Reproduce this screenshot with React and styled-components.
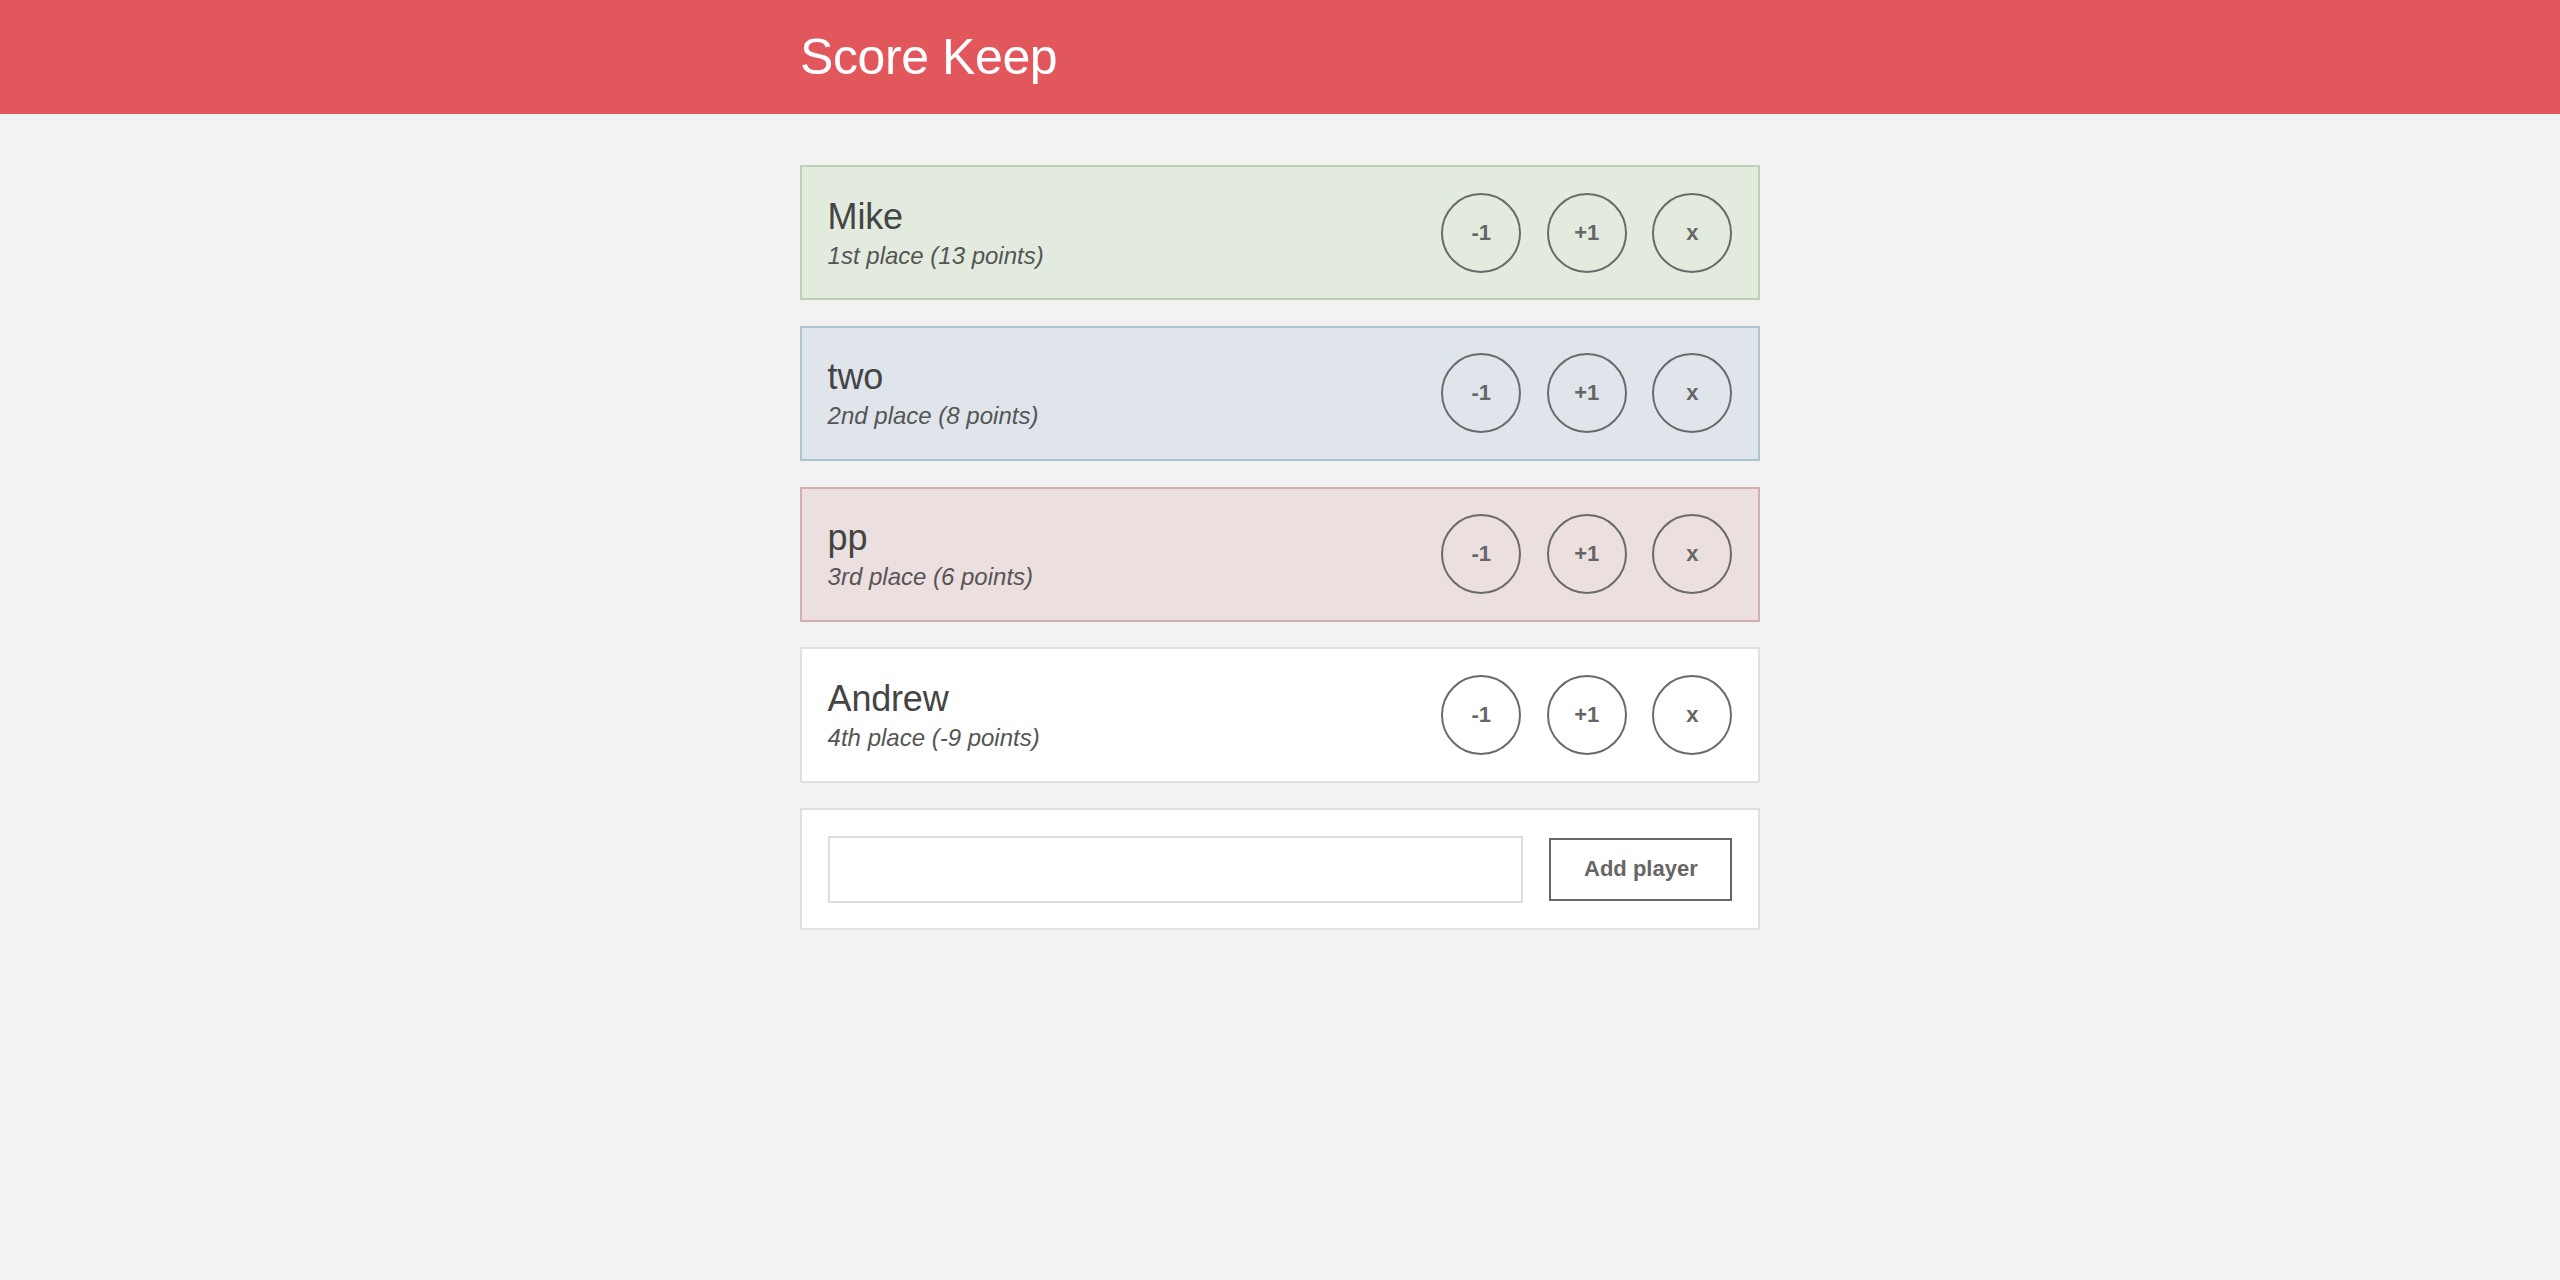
import styled, { createGlobalStyle } from "styled-components"

const GlobalStyle = createGlobalStyle`
    html, body {
        margin: 0;
        padding: 0;
        background-color: #f2f2f2;
        font-family: "Liberation Sans", Arial, Helvetica, sans-serif;
        color: #444;
    }
    * {
        box-sizing: border-box;
    }
`

const Cabecalho = styled.header`
    background-color: #e1575c;
    height: 114px;
    display: flex;
    align-items: center;
`

const Wrapper = styled.div`
    width: 960px;
    margin: 0 auto;
`

const Titulo = styled.h1`
    margin: 0;
    color: white;
    font-size: 50px;
    font-weight: 400;
    letter-spacing: -0.4px;
`

const Lista = styled.main`
    width: 960px;
    margin: 0 auto;
    padding-top: 51px;
    display: flex;
    flex-direction: column;
    gap: 25.6px;
`

const cores = {
    primeiro: { fundo: "#e3ebdf", borda: "#bcd2b2" },
    segundo: { fundo: "#dfe5eb", borda: "#afc2d1" },
    terceiro: { fundo: "#ecdfdf", borda: "#d4aeae" },
    outro: { fundo: "#ffffff", borda: "#e0e0e0" },
}

const Cartao = styled.div`
    display: flex;
    align-items: center;
    justify-content: space-between;
    padding: 25.6px;
    background-color: ${({ $rank }) => cores[$rank].fundo};
    border: 2px solid ${({ $rank }) => cores[$rank].borda};
`

const Info = styled.div`
    display: flex;
    flex-direction: column;
    gap: 4px;
`

const Nome = styled.h3`
    margin: 0;
    font-size: 36px;
    font-weight: 400;
    color: #444;
    letter-spacing: -0.2px;
`

const Posicao = styled.p`
    margin: 0;
    font-size: 24px;
    font-style: italic;
    font-weight: 400;
    color: #555;
`

const Acoes = styled.div`
    display: flex;
    gap: 25.6px;
`

const BotaoRedondo = styled.button`
    width: 80px;
    height: 80px;
    border-radius: 50%;
    border: 2px solid #6a6a6a;
    background: transparent;
    color: #666;
    font-family: "Liberation Sans", Arial, sans-serif;
    font-size: 22px;
    font-weight: 700;
    padding: 0;
    cursor: pointer;
`

const Formulario = styled.form`
    display: flex;
    align-items: center;
    gap: 26.6px;
    padding: 25.6px;
    background-color: white;
    border: 2px solid #e0e0e0;
`

const Campo = styled.input`
    flex: 1;
    height: 67px;
    border: 2px solid #dddddd;
    font-size: 22px;
    padding: 0 12px;
    outline: none;
`

const BotaoAdicionar = styled.button`
    width: 183px;
    height: 63px;
    border: 2px solid #666;
    background: transparent;
    color: #666;
    font-family: "Liberation Sans", Arial, sans-serif;
    font-size: 22px;
    font-weight: 700;
    cursor: pointer;
`

const jogadores = [
    { nome: "Mike", texto: "1st place (13 points)", rank: "primeiro" },
    { nome: "two", texto: "2nd place (8 points)", rank: "segundo" },
    { nome: "pp", texto: "3rd place (6 points)", rank: "terceiro" },
    { nome: "Andrew", texto: "4th place (-9 points)", rank: "outro" },
]

const App = () => {
    return (
        <>
            <GlobalStyle />
            <Cabecalho>
                <Wrapper>
                    <Titulo>Score Keep</Titulo>
                </Wrapper>
            </Cabecalho>
            <Lista>
                {jogadores.map((jogador) => (
                    <Cartao key={jogador.nome} $rank={jogador.rank}>
                        <Info>
                            <Nome>{jogador.nome}</Nome>
                            <Posicao>{jogador.texto}</Posicao>
                        </Info>
                        <Acoes>
                            <BotaoRedondo>-1</BotaoRedondo>
                            <BotaoRedondo>+1</BotaoRedondo>
                            <BotaoRedondo>x</BotaoRedondo>
                        </Acoes>
                    </Cartao>
                ))}
                <Formulario onSubmit={(evento) => evento.preventDefault()}>
                    <Campo type="text" name="playerName" />
                    <BotaoAdicionar>Add player</BotaoAdicionar>
                </Formulario>
            </Lista>
        </>
    )
}

export default App
